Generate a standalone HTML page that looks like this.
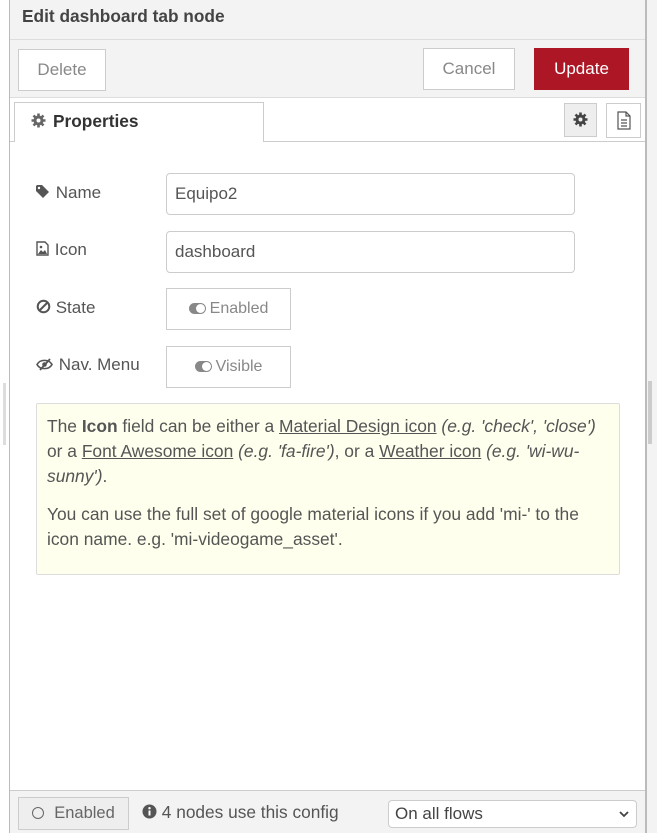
<!DOCTYPE html>
<html><head><style>
*{box-sizing:border-box;margin:0;padding:0}
body{width:657px;height:833px;background:#fff;font-family:"Liberation Sans",sans-serif;color:#555;position:relative;overflow:hidden;font-size:16px}
.a{position:absolute}
.btn{position:absolute;border:1px solid #ccc;background:#fff;color:#888;font-size:17px;text-align:center}
input.f{position:absolute;left:166px;width:409px;height:42px;border:1px solid #ccc;border-radius:4px;padding-left:8px;font:17px "Liberation Sans",sans-serif;color:#555;background:#fff}
.lbl{position:absolute;left:36px;font-size:17px;color:#555}
.tog{position:absolute;left:166px;width:125px;height:42px;border:1px solid #ccc;background:#fff;color:#888;font-size:16px;text-align:center;line-height:40px}
.sw{display:inline-block;width:17px;height:11px;border-radius:6px;background:#888;position:relative;vertical-align:-1px;margin-right:4px}
.sw:after{content:"";position:absolute;right:1px;top:1px;width:9px;height:9px;border-radius:5px;background:#fff}
u{text-decoration:underline}
</style></head><body>
<div class="a" style="left:0;top:0;width:9px;height:833px;background:#fff"></div>
<div class="a" style="left:3px;top:383px;width:3px;height:62px;background:#ddd"></div>
<div class="a" style="left:9px;top:0;width:1px;height:833px;background:#bbb"></div>
<div class="a" style="left:645px;top:0;width:2px;height:833px;background:#bbb"></div>
<div class="a" style="left:647px;top:0;width:10px;height:833px;background:#f3f3f3"></div>
<div class="a" style="left:648px;top:381px;width:4px;height:63px;background:#ccc"></div>
<div class="a" style="left:10px;top:0;width:635px;height:97px;background:#f3f3f3"></div>
<div class="a" style="left:10px;top:39px;width:635px;height:1px;background:#ddd"></div>
<div class="a" style="left:10px;top:97px;width:635px;height:1px;background:#ddd"></div>
<div class="a" style="left:22px;top:6px;font-weight:bold;font-size:17.3px;color:#444">Edit dashboard tab node</div>
<div class="btn" style="left:18px;top:49px;width:88px;height:42px;line-height:40px">Delete</div>
<div class="btn" style="left:423px;top:48px;width:92px;height:42px;line-height:40px">Cancel</div>
<div class="btn" style="left:534px;top:48px;width:95px;height:42px;line-height:40px;background:#ad1625;border-color:#ad1625;color:#fff">Update</div>
<div class="a" style="left:10px;top:141px;width:635px;height:1px;background:#ccc"></div>
<div class="a" style="left:14px;top:102px;width:250px;height:40px;background:#fff;border:1px solid #ccc;border-bottom:none"></div>
<svg class="a" style="left:31px;top:113px" width="15" height="15" viewBox="0 0 15 15"><g fill="#666"><circle cx="7.5" cy="7.5" r="5"/><g stroke="#666" stroke-width="2.6"><path d="M7.5 0.5v14M0.5 7.5h14M2.5 2.5l10 10M12.5 2.5l-10 10"/></g></g><circle cx="7.5" cy="7.5" r="2" fill="#fff"/></svg>
<div class="a" style="left:53px;top:111px;font-size:17.3px;font-weight:bold;color:#333">Properties</div>
<div class="a" style="left:564px;top:103px;width:33px;height:34px;background:#eee;border:1px solid #ccc"></div>
<svg class="a" style="left:573px;top:112px" width="15" height="15" viewBox="0 0 15 15"><g fill="#444"><circle cx="7.5" cy="7.5" r="5"/><g stroke="#444" stroke-width="2.6"><path d="M7.5 0.5v14M0.5 7.5h14M2.5 2.5l10 10M12.5 2.5l-10 10"/></g></g><circle cx="7.5" cy="7.5" r="2" fill="#eee"/></svg>
<div class="a" style="left:606px;top:103px;width:35px;height:35px;background:#fff;border:1px solid #ccc"><svg width="33" height="33" viewBox="0 0 33 33"><path d="M11 8h8l4 4v13h-12z M19 8v4h4 M14 16h6 M14 19h6 M14 22h6" fill="none" stroke="#555" stroke-width="1.2"/></svg></div>

<div class="lbl" style="top:183px"><svg width="15" height="14" viewBox="0 0 15 14" style="vertical-align:-1px"><path d="M0 1v5l7 7 6-6-7-7H1z" fill="#555"/><circle cx="3" cy="3" r="1.2" fill="#fff"/></svg> Name</div>
<input class="f" style="top:173px" value="Equipo2">
<div class="lbl" style="top:240px"><svg width="14" height="15" viewBox="0 0 14 15" style="vertical-align:-1px"><path d="M1 1h8l3 3v10H1z" fill="none" stroke="#555" stroke-width="1.4"/><path d="M2 13l3-4 2 2 2-2 2 4z" fill="#555"/><circle cx="5" cy="6" r="1.3" fill="#555"/></svg> Icon</div>
<input class="f" style="top:231px" value="dashboard">
<div class="lbl" style="top:298px"><svg width="15" height="15" viewBox="0 0 15 15" style="vertical-align:-1px"><circle cx="7.5" cy="7.5" r="5.8" fill="none" stroke="#555" stroke-width="2"/><path d="M3.5 11.5l8-8" stroke="#555" stroke-width="2"/></svg> State</div>
<div class="tog" style="top:288px"><span class="sw"></span>Enabled</div>
<div class="lbl" style="top:355px"><svg width="18" height="13" viewBox="0 0 18 13" style="vertical-align:-1px"><path d="M1 6.5C4 1 13 1 16 6.5 13 12 4 12 1 6.5z" fill="none" stroke="#555" stroke-width="1.6"/><circle cx="8.5" cy="6.5" r="2.3" fill="#555"/><path d="M4 12l10-11" stroke="#555" stroke-width="1.8"/></svg> Nav. Menu</div>
<div class="tog" style="top:346px"><span class="sw"></span>Visible</div>

<div class="a" style="left:36px;top:403px;width:584px;height:172px;background:#ffffee;border:1px solid #ddd;border-radius:2px;padding:10px 10px;font-size:17.4px;line-height:25px;color:#555">
<p>The <b>Icon</b> field can be either a <u>Material Design icon</u> <i>(e.g. 'check', 'close')</i> or a <u>Font Awesome icon</u> <i>(e.g. 'fa-fire')</i>, or a <u>Weather icon</u> <i>(e.g. 'wi-wu-sunny')</i>.</p>
<p style="margin-top:13px">You can use the full set of google material icons if you add 'mi-' to the icon name. e.g. 'mi-videogame_asset'.</p>
</div>

<div class="a" style="left:10px;top:790px;width:635px;height:43px;background:#f3f3f3;border-top:1px solid #ccc"></div>
<div class="btn" style="left:18px;top:797px;width:111px;height:33px;line-height:31px;background:#eee;color:#666;font-size:16.5px"><span style="display:inline-block;width:12px;height:12px;border:1px solid #666;border-radius:50%;vertical-align:-1px;margin-right:10px"></span>Enabled</div>
<div class="a" style="left:142px;top:802px;font-size:17.3px;color:#555"><svg width="15" height="15" viewBox="0 0 15 15" style="vertical-align:-1px"><circle cx="7.5" cy="7.5" r="7" fill="#555"/><rect x="6.5" y="6.5" width="2" height="5" fill="#fff"/><circle cx="7.5" cy="4.2" r="1.2" fill="#fff"/></svg> 4 nodes use this config</div>
<div class="a" style="left:388px;top:800px;width:249px;height:28px;background:#fff;border:1px solid #ccc;border-radius:4px;font-size:17px;color:#444;padding-left:6px;line-height:26px">On all flows<svg class="a" style="right:7px;top:10px" width="10" height="7" viewBox="0 0 10 7"><path d="M1 1l4 4 4-4" fill="none" stroke="#444" stroke-width="1.8"/></svg></div>
</body></html>
